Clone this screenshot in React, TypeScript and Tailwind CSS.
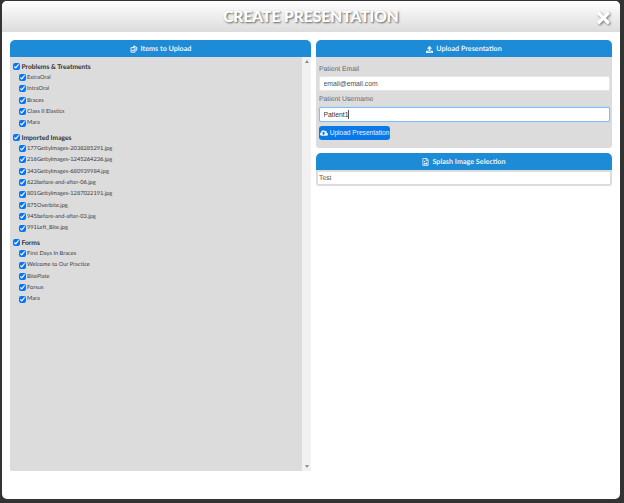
import { FaCloudUploadAlt, FaRegFileImage, FaTimes, FaUpload } from 'react-icons/fa'

const GROUPS = [
  {
    title: 'Problems & Treatments',
    items: ['ExtraOral', 'IntraOral', 'Braces', 'Class II Elastics', 'Mara'],
  },
  {
    title: 'Imported Images',
    items: [
      '177GettyImages-2038285291.jpg',
      '216GettyImages-1245264236.jpg',
      '343GettyImages-680939984.jpg',
      '623before-and-after-06.jpg',
      '801GettyImages-1287022191.jpg',
      '875Overbite.jpg',
      '945before-and-after-03.jpg',
      '991Left_Bite.jpg',
    ],
  },
  {
    title: 'Forms',
    items: ['First Days In Braces', 'Welcome to Our Practice', 'BitePlate', 'Forsus', 'Mara'],
  },
]

function Check() {
  return <input type="checkbox" defaultChecked className="m-0 h-[7px] w-[7px] shrink-0 accent-[#0075ff]" />
}

function PanelHeader({ icon, title }: { icon: React.ReactNode; title: string }) {
  return (
    <div className="flex h-[17px] items-center justify-center gap-[3px] rounded-t-[5px] bg-[#1e8bd6] pt-px text-[7.2px] font-bold text-[#e8f3fa]">
      {icon}
      <span>{title}</span>
    </div>
  )
}

export default function App() {
  return (
    <div className="h-[503px] w-[624px] overflow-hidden bg-[#333333] pl-[2px] pt-[1px] font-['Lato',sans-serif] [text-rendering:geometricPrecision]">
      <div className="flex h-[498px] w-[618px] flex-col overflow-hidden rounded-[5px] bg-white">
        {/* Header */}
        <div className="relative flex h-[31px] shrink-0 items-center justify-center bg-gradient-to-b from-white to-[#dcdcdc] pt-[2px]">
          <h1 className="text-[15.5px] font-black leading-none text-white [text-shadow:1px_1px_2px_rgba(0,0,0,0.6)]">
            CREATE PRESENTATION
          </h1>
          <FaTimes className="absolute right-[10px] top-[8px] h-[18px] w-[13px] text-white drop-shadow-[1px_1px_1px_rgba(0,0,0,0.5)]" />
        </div>

        <div className="flex gap-[5px] pl-[8px] pt-[8px]">
          {/* Items to upload */}
          <div className="w-[301px]">
            <PanelHeader
              title="Items to Upload"
              icon={
                <svg width="8" height="8" viewBox="0 0 8 8" fill="none" stroke="currentColor" strokeWidth="1">
                  <path d="M3 2.2 4 .8l3.2 2-1.4 3.4" />
                  <path d="M1 2.6h4v4.6H1z" />
                  <path d="M2 5l1 1 1.4-2" />
                </svg>
              }
            />
            <div className="flex h-[414px]">
              <div className="flex-1 rounded-bl-[2px] bg-[#dcdcdc] pl-[2.5px] pt-[3.5px] text-[#3a3a3a]">
                {GROUPS.map((group) => (
                  <div key={group.title} className="mb-[2.6px]">
                    <label className="flex h-[11.4px] items-center gap-[2px] text-[6.7px] font-bold text-[#333333]">
                      <Check />
                      <span className="pt-[1px]">{group.title}</span>
                    </label>
                    {group.items.map((item, i) => (
                      <label key={i} className="flex h-[11.4px] items-center gap-[1px] pl-[6.5px] text-[5.7px]">
                        <Check />
                        <span className="pt-[1px]">{item}</span>
                      </label>
                    ))}
                  </div>
                ))}
              </div>
              <div className="flex w-[9px] flex-col items-center justify-between bg-[#f1f1f1] py-[3px] text-[#8c8c8c]">
                <div className="h-0 w-0 border-x-[2px] border-b-[3px] border-x-transparent border-b-current" />
                <div className="h-0 w-0 border-x-[2px] border-t-[3px] border-x-transparent border-t-current" />
              </div>
            </div>
          </div>

          {/* Right column */}
          <div className="flex w-[296px] flex-col gap-[5px]">
            <div>
              <PanelHeader title="Upload Presentation" icon={<FaUpload className="h-[7px] w-[7px]" />} />
              <div className="h-[91px] rounded-b-[3px] bg-[#dcdcdc] px-[3px] pt-[7px] font-['Liberation_Sans',Arial,sans-serif] text-[6.8px]">
                <label className="block h-[12px] leading-[11px] text-[#5a6570]">Patient Email</label>
                <input
                  readOnly
                  value="email@email.com"
                  className="block h-[15px] w-[291px] rounded-[2px] border border-[#e6e6e6] bg-white px-[3.5px] text-[6.8px] text-[#495057] outline-none"
                />
                <label className="mt-[2px] block h-[14px] leading-[14px] text-[#5a6570]">Patient Username</label>
                <div className="relative">
                  <input
                    readOnly
                    value="Patient1"
                    className="block h-[15px] w-[291px] rounded-[2px] border border-[#80bdff] bg-white px-[3.5px] text-[6.8px] text-[#333333] shadow-[0_0_1px_#80bdff] outline-none"
                  />
                  <span className="absolute left-[29px] top-[3px] h-[9px] w-px bg-[#555555]" />
                </div>
                <button className="mt-[4px] flex h-[14px] w-[71px] items-center justify-center gap-[2px] rounded-[3px] bg-[#0a78e6] text-[6.6px] text-[#e8f3fa]">
                  <FaCloudUploadAlt className="h-[8px] w-[8px]" />
                  Upload Presentation
                </button>
              </div>
            </div>

            <div>
              <PanelHeader title="Splash Image Selection" icon={<FaRegFileImage className="h-[8px] w-[7px]" />} />
              <div className="h-[16px] rounded-b-[3px] bg-[#dcdcdc] p-[2px]">
                <div className="h-[12px] bg-white px-[1px] font-['Liberation_Sans',Arial,sans-serif] text-[6.8px] leading-[13px] text-[#495057]">
                  Test
                </div>
              </div>
            </div>
          </div>
        </div>
      </div>
    </div>
  )
}
